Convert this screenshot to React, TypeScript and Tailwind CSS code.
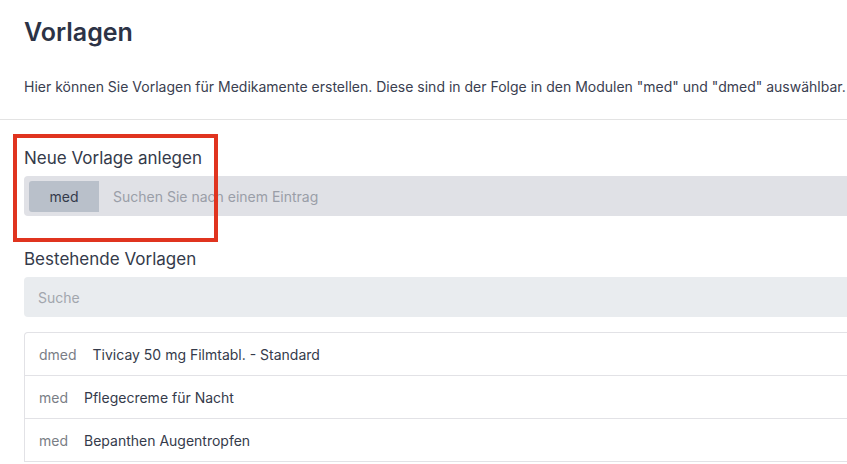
import React from 'react';

const templates = [
  { module: 'dmed', name: 'Tivicay 50 mg Filmtabl. - Standard' },
  { module: 'med', name: 'Pflegecreme für Nacht' },
  { module: 'med', name: 'Bepanthen Augentropfen' },
];

export default function App() {
  return (
    <div className="relative h-[464px] w-[847px] overflow-hidden bg-white font-['Inter',sans-serif] text-[#353b4b]">
      {/* Header */}
      <div className="border-b border-[#e3e3e3] pl-6 pt-4 pb-[22px]">
        <h1 className="text-[25px] leading-8 font-semibold text-[#2c3346]">Vorlagen</h1>
        <p className="mt-[29px] text-[14px] leading-5 text-[#3a4050]">
          Hier können Sie Vorlagen für Medikamente erstellen. Diese sind in der Folge in den Modulen "med" und "dmed" auswählbar.
        </p>
      </div>

      <div className="-mr-2 pl-6">
        {/* New template */}
        <h2 className="mt-[26px] text-[17px] leading-6 text-[#343a4a]">Neue Vorlage anlegen</h2>
        <div className="mt-1.5 flex h-10 items-center rounded-[4px] bg-[#e0e1e6] pl-[5px]">
          <div className="flex h-[31px] w-[70px] items-center justify-center rounded-l-[3px] bg-[#b9c0ca] text-[14px] text-[#343a4a]">
            med
          </div>
          <span className="ml-[14px] text-[14px] text-[#9a9ea8]">Suchen Sie nach einem Eintrag</span>
        </div>

        {/* Existing templates */}
        <h2 className="mt-[31px] text-[17px] leading-6 text-[#343a4a]">Bestehende Vorlagen</h2>
        <div className="mt-1.5 flex h-10 items-center rounded-[4px] bg-[#e9ecef] pl-[14px] text-[14px] text-[#a2a6ad]">
          Suche
        </div>

        <div className="mt-[15px] rounded-t-[4px] border-x border-t border-[#e2e2e6]">
          {templates.map((t, i) => (
            <div
              key={i}
              className="flex h-[43px] items-center border-b border-[#e2e2e6] pl-[14px] text-[14px]"
            >
              <span className="text-[#7a7e86]">{t.module}</span>
              <span className="ml-4 text-[#353b4b]">{t.name}</span>
            </div>
          ))}
        </div>
      </div>

      {/* Annotation box */}
      <div className="pointer-events-none absolute left-[13px] top-[134px] h-[108px] w-[205px] border-4 border-[#e0341f]" />
    </div>
  );
}
